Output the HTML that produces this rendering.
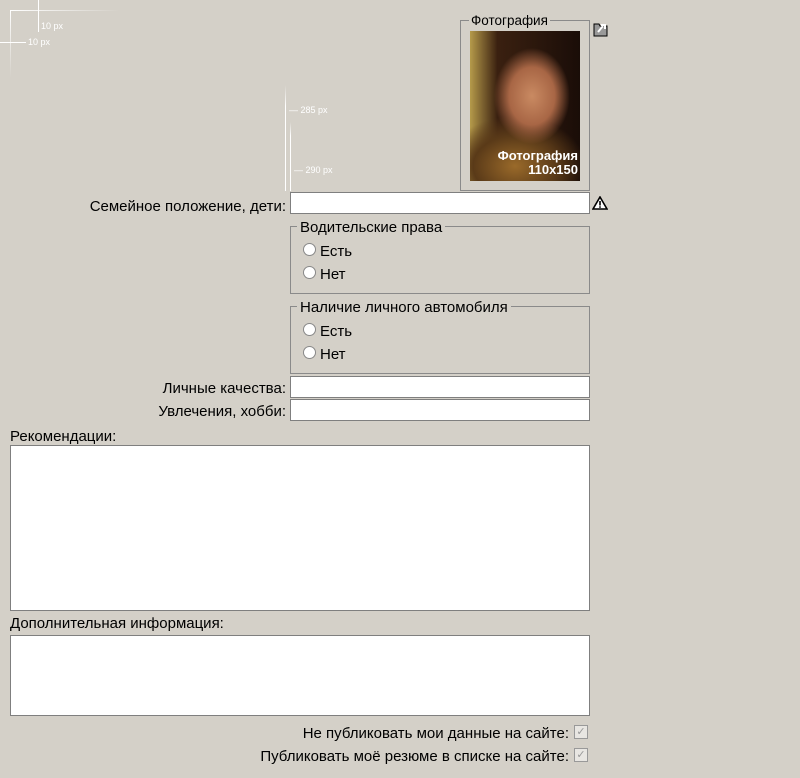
<!DOCTYPE html>
<html><head><meta charset="utf-8"><style>
body{margin:0;width:800px;height:778px;background:#d4d0c8;position:relative;overflow:hidden;font-family:"Liberation Sans",Arial,sans-serif;font-size:15px;color:#000}
.a{position:absolute}
.inp{position:absolute;background:#fff;border:1px solid #7f7f7f;box-sizing:border-box}
.lbl{position:absolute;right:514px;text-align:right;white-space:nowrap}
.fs{position:absolute;border:1px solid #8a8a8a;box-sizing:border-box}
.lg{position:absolute;background:#d4d0c8;padding:0 3px;top:-8px;left:6px;white-space:nowrap}
.rad{position:absolute;width:13px;height:13px;border-radius:50%;background:#fff;border:1px solid #888;box-sizing:border-box}
.rt{position:absolute;white-space:nowrap}
.cb{position:absolute;width:14px;height:14px;background:#e8e6e2;border:1px solid #999;box-sizing:border-box;font-size:11px;line-height:12px;text-align:center;color:#999}
.w{color:#fff;font-size:9px;position:absolute;white-space:nowrap}
</style></head><body>
<div class="a" style="left:10px;top:10px;width:110px;height:1px;background:linear-gradient(90deg,#fff,rgba(255,255,255,0))"></div>
<div class="a" style="left:10px;top:10px;width:1px;height:68px;background:linear-gradient(#fff,rgba(255,255,255,0))"></div>
<div class="a" style="left:38px;top:0;width:1px;height:32px;background:#fff"></div>
<div class="w" style="left:41px;top:21px">10 px</div>
<div class="a" style="left:0;top:42px;width:26px;height:1px;background:#fff"></div>
<div class="w" style="left:28px;top:37px">10 px</div>
<div class="a" style="left:285px;top:85px;width:1px;height:106px;background:linear-gradient(rgba(255,255,255,0),#fff 20%)"></div>
<div class="w" style="left:289px;top:105px">— 285 px</div>
<div class="a" style="left:290px;top:122px;width:1px;height:69px;background:linear-gradient(rgba(255,255,255,0),#fff 20%)"></div>
<div class="w" style="left:294px;top:165px">— 290 px</div>

<div class="fs" style="left:460px;top:20px;width:130px;height:171px"><div class="lg" style="left:8px;top:-8px;padding:0 2px;font-size:13.5px">Фотография</div></div>
<div class="a" style="left:470px;top:31px;width:110px;height:150px;background:radial-gradient(ellipse 38px 48px at 62px 65px,#c98a62 0%,#a86645 60%,rgba(40,20,10,0) 100%),radial-gradient(ellipse 70px 50px at 45px 135px,#9a6a2a,#5a3a18 60%,rgba(0,0,0,0)),linear-gradient(90deg,#b59a4a 0%,#3a2010 25%,#1a0d08 100%)"></div>
<div class="a" style="left:470px;top:149px;width:108px;text-align:right;color:#fff;font-weight:bold;font-size:13px;line-height:14px">Фотография<br>110x150</div>
<svg class="a" style="left:592px;top:20px" width="18" height="18" viewBox="0 0 18 18"><path d="M2 4h5l1 2h7v10H2z" fill="#999" stroke="#000"/><path d="M6 12 L11 6 M9 5h4v4" stroke="#fff" stroke-width="2" fill="none"/></svg>

<div class="lbl" style="top:198px">Семейное положение, дети:</div>
<div class="inp" style="left:290px;top:192px;width:300px;height:22px"></div>
<svg class="a" style="left:592px;top:196px" width="16" height="14" viewBox="0 0 16 14"><path d="M8 1L15 13H1Z" fill="#fff" stroke="#000" stroke-width="1.6"/><rect x="7.2" y="5" width="1.6" height="4.5"/><rect x="7.2" y="10.3" width="1.6" height="1.5"/></svg>

<div class="fs" style="left:290px;top:226px;width:300px;height:68px"><div class="lg">Водительские права</div></div>
<div class="rad" style="left:303px;top:243px"></div><div class="rt" style="left:320px;top:243px">Есть</div>
<div class="rad" style="left:303px;top:266px"></div><div class="rt" style="left:320px;top:266px">Нет</div>

<div class="fs" style="left:290px;top:306px;width:300px;height:68px"><div class="lg">Наличие личного автомобиля</div></div>
<div class="rad" style="left:303px;top:323px"></div><div class="rt" style="left:320px;top:323px">Есть</div>
<div class="rad" style="left:303px;top:346px"></div><div class="rt" style="left:320px;top:346px">Нет</div>

<div class="lbl" style="top:380px">Личные качества:</div>
<div class="inp" style="left:290px;top:376px;width:300px;height:22px"></div>
<div class="lbl" style="top:403px">Увлечения, хобби:</div>
<div class="inp" style="left:290px;top:399px;width:300px;height:22px"></div>

<div class="a" style="left:10px;top:428px">Рекомендации:</div>
<div class="inp" style="left:10px;top:445px;width:580px;height:166px"></div>
<div class="a" style="left:10px;top:615px">Дополнительная информация:</div>
<div class="inp" style="left:10px;top:635px;width:580px;height:81px"></div>

<div class="lbl" style="top:725px;right:231px">Не публиковать мои данные на сайте:</div>
<div class="cb" style="left:574px;top:725px">✓</div>
<div class="lbl" style="top:748px;right:231px">Публиковать моё резюме в списке на сайте:</div>
<div class="cb" style="left:574px;top:748px">✓</div>
</body></html>
